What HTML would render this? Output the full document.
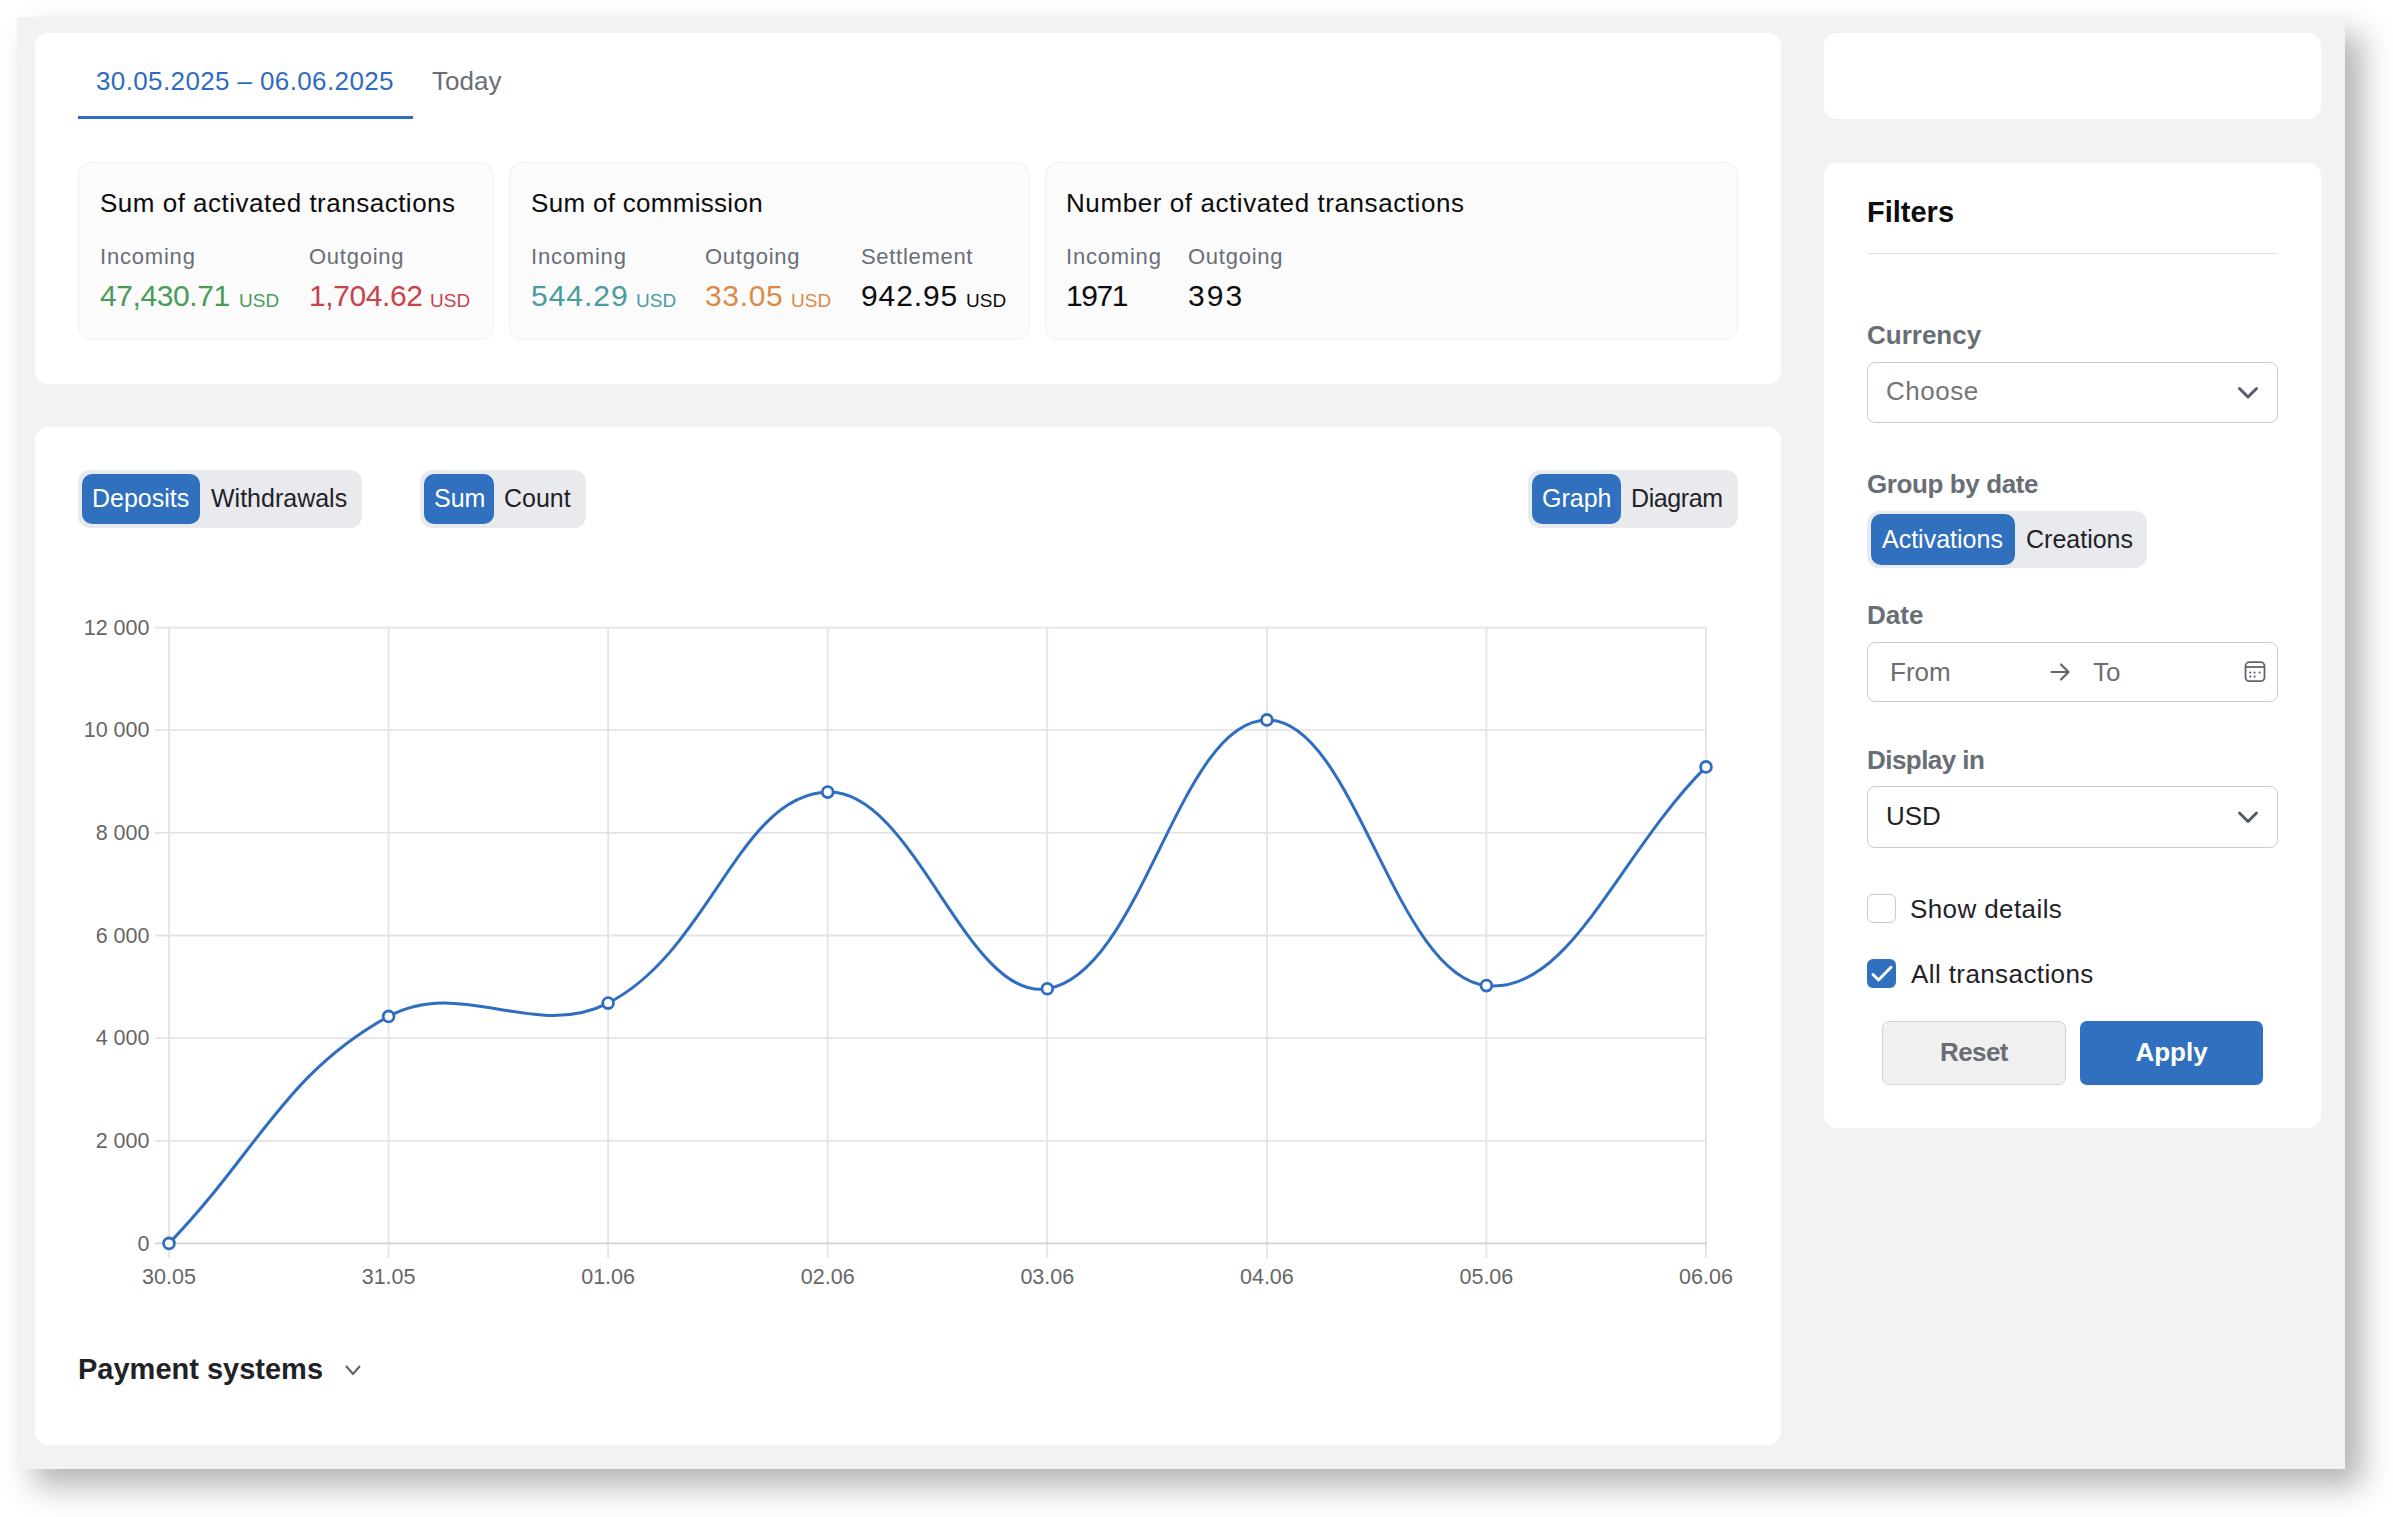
<!DOCTYPE html>
<html><head><meta charset="utf-8">
<style>
html,body{margin:0;padding:0;width:2393px;height:1517px;overflow:hidden;background:#fff;}
body{font-family:"Liberation Sans",sans-serif;position:relative;}
.win{position:absolute;left:17px;top:17px;width:2328px;height:1452px;background:#f1f2f4;
 box-shadow:17px 17px 30px rgba(0,0,0,0.30);}
.card{position:absolute;background:#fff;border-radius:13px;}
.t{position:absolute;white-space:nowrap;}
.stat{position:absolute;background:#fbfbfc;border:1.5px solid #f0f1f3;border-radius:13px;box-sizing:border-box;}
.seg{position:absolute;background:#e9eaee;border-radius:12px;}
.act{position:absolute;background:#3070be;border-radius:10px;}
.lbl{color:#696e76;font-weight:700;}
.inp{position:absolute;border:1.5px solid #c9cdd3;border-radius:8px;box-sizing:border-box;background:#fff;}
</style></head>
<body>
<div class="win"></div>

<!-- top left card -->
<div class="card" style="left:35px;top:33px;width:1746px;height:351px;"></div>
<!-- chart card -->
<div class="card" style="left:35px;top:427px;width:1746px;height:1018px;"></div>
<!-- right top card -->
<div class="card" style="left:1824px;top:33px;width:497px;height:86px;"></div>
<!-- filters card -->
<div class="card" style="left:1824px;top:163px;width:497px;height:965px;"></div>

<!-- TABS -->
<div class="t" style="left:96px;top:68px;font-size:26px;line-height:26px;letter-spacing:0.38px;color:#2f6cc0;">30.05.2025 – 06.06.2025</div>
<div class="t" style="left:432px;top:68px;font-size:26px;line-height:26px;color:#6a6e76;">Today</div>
<div style="position:absolute;left:78px;top:116px;width:335px;height:3px;background:#2f6cc0;"></div>

<!-- STAT CARDS -->
<div class="stat" style="left:78px;top:162px;width:416px;height:178px;"></div>
<div class="stat" style="left:509px;top:162px;width:521px;height:178px;"></div>
<div class="stat" style="left:1045px;top:162px;width:693px;height:178px;"></div>

<div id="stats">
<div class="t" style="left:100px;top:190px;font-size:26px;line-height:26px;letter-spacing:0.5px;color:#0d0d0d;">Sum of activated transactions</div>
<div class="t" style="left:100px;top:246px;font-size:22px;line-height:22px;letter-spacing:0.8px;color:#6a6e76;">Incoming</div>
<div class="t" style="left:309px;top:246px;font-size:22px;line-height:22px;letter-spacing:0.75px;color:#6a6e76;">Outgoing</div>
<div class="t" style="left:100px;top:281.3px;font-size:30px;line-height:30px;letter-spacing:-0.42px;color:#4a9b56;">47,430.71</div>
<div class="t" style="left:239px;top:290.5px;font-size:19px;line-height:19px;color:#4a9b56;">USD</div>
<div class="t" style="left:309px;top:281.3px;font-size:30px;line-height:30px;letter-spacing:-0.4px;color:#c8434b;">1,704.62</div>
<div class="t" style="left:430px;top:290.5px;font-size:19px;line-height:19px;color:#c8434b;">USD</div>

<div class="t" style="left:531px;top:190px;font-size:26px;line-height:26px;letter-spacing:0.3px;color:#0d0d0d;">Sum of commission</div>
<div class="t" style="left:531px;top:246px;font-size:22px;line-height:22px;letter-spacing:0.8px;color:#6a6e76;">Incoming</div>
<div class="t" style="left:705px;top:246px;font-size:22px;line-height:22px;letter-spacing:0.75px;color:#6a6e76;">Outgoing</div>
<div class="t" style="left:861px;top:246px;font-size:22px;line-height:22px;letter-spacing:0.7px;color:#6a6e76;">Settlement</div>
<div class="t" style="left:531px;top:281.3px;font-size:30px;line-height:30px;letter-spacing:0.98px;color:#4a9c9e;">544.29</div>
<div class="t" style="left:636px;top:290.5px;font-size:19px;line-height:19px;color:#4a9c9e;">USD</div>
<div class="t" style="left:705px;top:281.3px;font-size:30px;line-height:30px;letter-spacing:0.65px;color:#dc8a45;">33.05</div>
<div class="t" style="left:791px;top:290.5px;font-size:19px;line-height:19px;color:#dc8a45;">USD</div>
<div class="t" style="left:861px;top:281.3px;font-size:30px;line-height:30px;letter-spacing:0.88px;color:#0d0d0d;">942.95</div>
<div class="t" style="left:966px;top:290.5px;font-size:19px;line-height:19px;color:#0d0d0d;">USD</div>

<div class="t" style="left:1066px;top:190px;font-size:26px;line-height:26px;letter-spacing:0.58px;color:#0d0d0d;">Number of activated transactions</div>
<div class="t" style="left:1066px;top:246px;font-size:22px;line-height:22px;letter-spacing:0.8px;color:#6a6e76;">Incoming</div>
<div class="t" style="left:1188px;top:246px;font-size:22px;line-height:22px;letter-spacing:0.75px;color:#6a6e76;">Outgoing</div>
<div class="t" style="left:1066px;top:281.3px;font-size:30px;line-height:30px;letter-spacing:-1.4px;color:#0d0d0d;">1971</div>
<div class="t" style="left:1188px;top:281.3px;font-size:30px;line-height:30px;letter-spacing:2.05px;color:#0d0d0d;">393</div>
</div>

<!-- CHART TOOLBAR -->
<div id="toolbar">
<div class="seg" style="left:78px;top:470px;width:284px;height:58px;"></div>
<div class="act" style="left:82px;top:474px;width:118px;height:50px;"></div>
<div class="t" style="left:92px;top:486px;font-size:25px;line-height:25px;color:#fff;">Deposits</div>
<div class="t" style="left:211px;top:486px;font-size:25px;line-height:25px;color:#1f2328;">Withdrawals</div>

<div class="seg" style="left:420px;top:470px;width:166px;height:58px;"></div>
<div class="act" style="left:424px;top:474px;width:70px;height:50px;"></div>
<div class="t" style="left:434px;top:486px;font-size:25px;line-height:25px;color:#fff;">Sum</div>
<div class="t" style="left:504px;top:486px;font-size:25px;line-height:25px;color:#1f2328;">Count</div>

<div class="seg" style="left:1528px;top:470px;width:210px;height:58px;"></div>
<div class="act" style="left:1532px;top:474px;width:89px;height:50px;"></div>
<div class="t" style="left:1542px;top:486px;font-size:25px;line-height:25px;color:#fff;">Graph</div>
<div class="t" style="left:1631px;top:486px;font-size:25px;line-height:25px;letter-spacing:-0.4px;color:#1f2328;">Diagram</div>
</div>

<!-- CHART -->
<div id="chart">
<svg style="position:absolute;left:0;top:0;" width="2393" height="1517" viewBox="0 0 2393 1517">
<g stroke="#e4e4e4" stroke-width="1.8" fill="none">
<line x1="169.0" y1="627" x2="169.0" y2="1258"/>
<line x1="388.6" y1="627" x2="388.6" y2="1258"/>
<line x1="608.1" y1="627" x2="608.1" y2="1258"/>
<line x1="827.7" y1="627" x2="827.7" y2="1258"/>
<line x1="1047.3" y1="627" x2="1047.3" y2="1258"/>
<line x1="1266.9" y1="627" x2="1266.9" y2="1258"/>
<line x1="1486.4" y1="627" x2="1486.4" y2="1258"/>
<line x1="1706.0" y1="627" x2="1706.0" y2="1258"/>
<line x1="155" y1="627.6" x2="1707" y2="627.6"/>
<line x1="155" y1="730.2" x2="1707" y2="730.2"/>
<line x1="155" y1="832.9" x2="1707" y2="832.9"/>
<line x1="155" y1="935.5" x2="1707" y2="935.5"/>
<line x1="155" y1="1038.1" x2="1707" y2="1038.1"/>
<line x1="155" y1="1140.8" x2="1707" y2="1140.8"/>
</g>
<line x1="155" y1="1243.4" x2="1707" y2="1243.4" stroke="#d2d2d2" stroke-width="1.8"/>
<g font-family="Liberation Sans" font-size="21.5" fill="#666">
<text x="149.5" y="634.8" text-anchor="end">12 000</text>
<text x="149.5" y="737.4" text-anchor="end">10 000</text>
<text x="149.5" y="840.1" text-anchor="end">8 000</text>
<text x="149.5" y="942.7" text-anchor="end">6 000</text>
<text x="149.5" y="1045.3" text-anchor="end">4 000</text>
<text x="149.5" y="1148.0" text-anchor="end">2 000</text>
<text x="149.5" y="1250.6" text-anchor="end">0</text>
<text x="169.0" y="1283.6" text-anchor="middle">30.05</text>
<text x="388.6" y="1283.6" text-anchor="middle">31.05</text>
<text x="608.1" y="1283.6" text-anchor="middle">01.06</text>
<text x="827.7" y="1283.6" text-anchor="middle">02.06</text>
<text x="1047.3" y="1283.6" text-anchor="middle">03.06</text>
<text x="1266.9" y="1283.6" text-anchor="middle">04.06</text>
<text x="1486.4" y="1283.6" text-anchor="middle">05.06</text>
<text x="1706.0" y="1283.6" text-anchor="middle">06.06</text>
</g>
<path d="M169.0 1243.4 C256.8 1152.6 285.0 1073.1 388.6 1016.4 C460.7 976.9 534.5 1040.7 608.1 1003.1 C710.1 951.0 738.5 795.0 827.7 792.1 C914.1 789.3 966.6 1002.1 1047.3 988.8 C1142.3 973.2 1178.7 720.5 1266.9 719.9 C1354.4 719.3 1393.9 975.7 1486.4 985.6 C1569.6 994.5 1618.2 854.4 1706.0 766.9" fill="none" stroke="#2f6dc1" stroke-width="3"/>
<g fill="#fff" stroke="#2f6dc1" stroke-width="2.8">
<circle cx="169.0" cy="1243.4" r="5.4"/>
<circle cx="388.6" cy="1016.4" r="5.4"/>
<circle cx="608.1" cy="1003.1" r="5.4"/>
<circle cx="827.7" cy="792.1" r="5.4"/>
<circle cx="1047.3" cy="988.8" r="5.4"/>
<circle cx="1266.9" cy="719.9" r="5.4"/>
<circle cx="1486.4" cy="985.6" r="5.4"/>
<circle cx="1706.0" cy="766.9" r="5.4"/>
</g></svg>
</div>

<!-- PAYMENT SYSTEMS -->
<div id="payment">
<div class="t" style="left:78px;top:1355px;font-size:29px;line-height:29px;font-weight:700;color:#1f2328;">Payment systems</div>
<svg style="position:absolute;left:340px;top:1360px;" width="26" height="20" viewBox="340 1360 26 20"><polyline points="346,1366 353,1374 360,1366" fill="none" stroke="#59606a" stroke-width="2"/></svg>
</div>

<!-- FILTERS -->
<div id="filters">
<div class="t" style="left:1867px;top:197.5px;font-size:29px;line-height:29px;font-weight:700;color:#0d0d0d;">Filters</div>
<div style="position:absolute;left:1868px;top:253px;width:410px;height:1px;background:#dcdfe4;"></div>

<div class="t lbl" style="left:1867px;top:322.3px;font-size:26px;line-height:26px;">Currency</div>
<div class="inp" style="left:1867px;top:362px;width:411px;height:61px;"></div>
<div class="t" style="left:1886px;top:378px;font-size:26px;line-height:26px;letter-spacing:0.5px;color:#757575;">Choose</div>

<div class="t lbl" style="left:1867px;top:470.7px;font-size:26px;line-height:26px;letter-spacing:-0.4px;">Group by date</div>
<div class="seg" style="left:1867px;top:511px;width:280px;height:57px;"></div>
<div class="act" style="left:1871px;top:514px;width:144px;height:51px;"></div>
<div class="t" style="left:1882px;top:527.2px;font-size:25px;line-height:25px;color:#fff;">Activations</div>
<div class="t" style="left:2026px;top:527.2px;font-size:25px;line-height:25px;color:#1f2328;">Creations</div>

<div class="t lbl" style="left:1867px;top:602px;font-size:26px;line-height:26px;">Date</div>
<div class="inp" style="left:1867px;top:642px;width:411px;height:60px;"></div>
<div class="t" style="left:1890px;top:659.3px;font-size:26px;line-height:26px;color:#6e6e6e;">From</div>
<div class="t" style="left:2093px;top:659px;font-size:26px;line-height:26px;color:#6e6e6e;">To</div>

<div class="t lbl" style="left:1867px;top:747.3px;font-size:26px;line-height:26px;letter-spacing:-0.55px;">Display in</div>
<div class="inp" style="left:1867px;top:786px;width:411px;height:62px;"></div>
<div class="t" style="left:1886px;top:803.2px;font-size:26px;line-height:26px;color:#1f2328;">USD</div>

<div style="position:absolute;left:1867px;top:894px;width:29px;height:29px;border:1.5px solid #c7cbd1;border-radius:6px;box-sizing:border-box;background:#fff;"></div>
<div class="t" style="left:1910px;top:896px;font-size:26px;line-height:26px;letter-spacing:0.4px;color:#1f2328;">Show details</div>
<div style="position:absolute;left:1867px;top:959px;width:29px;height:29px;border-radius:6px;background:#3070be;"></div>
<div class="t" style="left:1911px;top:961px;font-size:26px;line-height:26px;letter-spacing:0.4px;color:#1f2328;">All transactions</div>

<div style="position:absolute;left:1882px;top:1020.5px;width:184px;height:64.5px;border:1.5px solid #cfd2d6;border-radius:7px;box-sizing:border-box;background:#f0f0f1;"></div>
<div class="t lbl" style="left:1882px;width:184px;text-align:center;top:1039.2px;font-size:26px;line-height:26px;letter-spacing:-0.6px;">Reset</div>
<div style="position:absolute;left:2080px;top:1020.5px;width:183px;height:64.5px;border-radius:7px;background:#3070be;"></div>
<div class="t" style="left:2080px;width:183px;text-align:center;top:1039.2px;font-size:26px;line-height:26px;font-weight:700;color:#fff;">Apply</div>

<svg style="position:absolute;left:0;top:0;" width="2393" height="1517" viewBox="0 0 2393 1517">
<g fill="none" stroke="#555c66" stroke-width="3" stroke-linecap="round" stroke-linejoin="round">
<polyline points="2239.5,388.5 2248,397 2256.5,388.5"/>
<polyline points="2239.5,813 2248,821.5 2256.5,813"/>
</g>
<g fill="none" stroke="#5f6670" stroke-width="2.2" stroke-linecap="round" stroke-linejoin="round">
<line x1="2051.5" y1="672" x2="2068" y2="672"/>
<polyline points="2061,664.5 2068.5,672 2061,679.5"/>
</g>
<g fill="none" stroke="#5f6670" stroke-width="1.8">
<rect x="2245.5" y="662.2" width="19" height="19" rx="4"/>
<line x1="2245.5" y1="667" x2="2264.5" y2="667"/>
</g>
<g fill="#5f6670">
<circle cx="2250.3" cy="672.6" r="1.1"/><circle cx="2254.6" cy="672.6" r="1.1"/><circle cx="2259.6" cy="672.6" r="1.1"/>
<circle cx="2250.3" cy="676.6" r="1.1"/><circle cx="2254.6" cy="676.6" r="1.1"/>
</g>
<polyline points="1873,974.5 1878.5,980 1891,967.3" fill="none" stroke="#fff" stroke-width="3" stroke-linecap="round" stroke-linejoin="round"/>
</svg>
</div>

</body></html>
